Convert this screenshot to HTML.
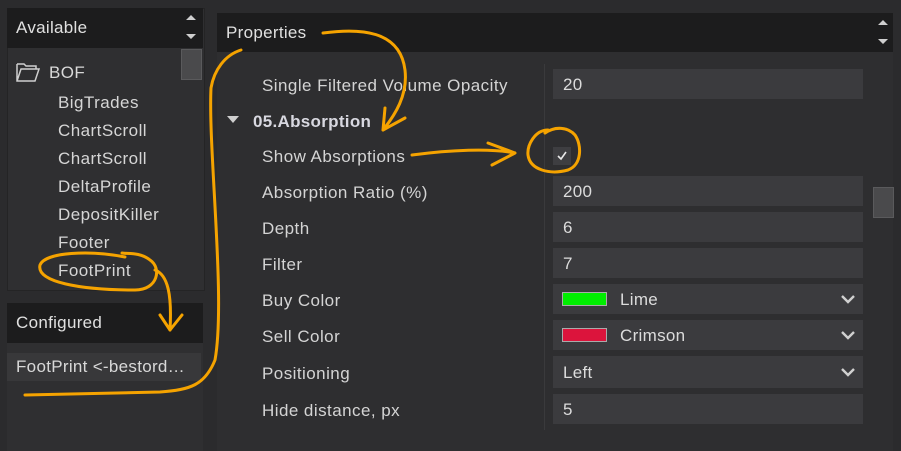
<!DOCTYPE html>
<html><head><style>
body{margin:0;width:901px;height:451px;background:#2b2b2d;font-family:"Liberation Sans",sans-serif;color:#d8d8d8;position:relative;overflow:hidden}
.a{position:absolute}
.hdr{background:#1c1c1d;font-size:17px;color:#e0e0e0;letter-spacing:.3px}
.lbl{position:absolute;left:262px;font-size:17px;letter-spacing:.45px;color:#d4d4d4}
.li{position:absolute;left:58px;font-size:17px;letter-spacing:.45px;color:#d6d6d6}
.val{position:absolute;left:553px;width:310px;height:30px;background:#3b3b3e;font-size:17px;letter-spacing:.3px;line-height:31px;text-indent:10px;color:#dcdcdc}
.chev{position:absolute;right:8px;top:8px}
.sw{position:absolute;left:9px;top:8px;width:43px;height:12px;border:1px solid #aaa}
.swt{position:absolute;left:67px;top:0;text-indent:0}
</style></head><body>
<div class="a" style="left:7px;top:8px;width:196px;height:281px;background:#2f2f31;border:1px solid #242425"></div>
<div class="a hdr" style="left:7px;top:8px;width:174px;height:40px;line-height:40px;text-indent:9px">Available</div>
<div class="a" style="left:181px;top:8px;width:22px;height:40px;background:#1c1c1d"></div>
<svg class="a" style="left:185px;top:13px" width="12" height="30"><path d="M1 7 L6 2 L11 7Z M1 21 L11 21 L6 26Z" fill="#cfcfcf"/></svg>
<div class="a" style="left:181px;top:49px;width:19px;height:29px;background:#4a4a4c;border:1px solid #5a5a5c"></div>
<svg class="a" style="left:15px;top:61px" width="26" height="22"><path d="M2 3 H9 L11 5 H21 V8 M2 3 V20 H20 L24 8 H6 L2 20" fill="none" stroke="#cfcfcf" stroke-width="1.5"/></svg>
<div class="a" style="left:49px;top:63px;font-size:17px;letter-spacing:.4px">BOF</div>
<div class="li" style="top:93px">BigTrades</div>
<div class="li" style="top:121px">ChartScroll</div>
<div class="li" style="top:149px">ChartScroll</div>
<div class="li" style="top:177px">DeltaProfile</div>
<div class="li" style="top:205px">DepositKiller</div>
<div class="li" style="top:233px;height:17px;overflow:hidden">Footer</div>
<div class="li" style="top:261px">FootPrint</div>
<div class="a hdr" style="left:7px;top:303px;width:196px;height:40px;line-height:40px;text-indent:9px">Configured</div>
<div class="a" style="left:7px;top:343px;width:196px;height:108px;background:#2f2f31"></div>
<div class="a" style="left:7px;top:353px;width:194px;height:28px;background:#38383a;font-size:17px;letter-spacing:.3px;line-height:28px;text-indent:9px;white-space:nowrap;overflow:hidden">FootPrint &lt;-bestord…</div>
<div class="a" style="left:217px;top:13px;width:676px;height:438px;background:#2e2e30"></div>
<div class="a hdr" style="left:217px;top:13px;width:656px;height:39px;line-height:39px;text-indent:9px">Properties</div>
<div class="a" style="left:873px;top:13px;width:20px;height:39px;background:#1c1c1d"></div>
<svg class="a" style="left:877px;top:18px" width="12" height="30"><path d="M1 7 L6 2 L11 7Z M1 21 L11 21 L6 26Z" fill="#cfcfcf"/></svg>
<div class="a" style="left:873px;top:187px;width:19px;height:29px;background:#4a4a4c;border:1px solid #5a5a5c"></div>
<div class="a" style="left:544px;top:64px;width:1px;height:366px;background:#3a3a3c"></div>
<div class="lbl" style="top:76px">Single Filtered Volume Opacity</div>
<div class="val" style="top:69px">20</div>
<svg class="a" style="left:226px;top:115px" width="14" height="10"><path d="M1 1 H13 L7 8Z" fill="#cfcfcf"/></svg>
<div class="a" style="left:253px;top:112px;font-size:17px;letter-spacing:.3px;font-weight:bold;color:#d8d8e0">05.Absorption</div>
<div class="lbl" style="top:147px">Show Absorptions</div>
<div class="a" style="left:553px;top:147px;width:18px;height:18px;background:#3e3e41"></div>
<svg class="a" style="left:556px;top:150px" width="12" height="12"><path d="M2 6 L5 9 L10 2" fill="none" stroke="#e8e8e8" stroke-width="1.6"/></svg>
<div class="lbl" style="top:183px">Absorption Ratio (%)</div><div class="val" style="top:176px">200</div>
<div class="lbl" style="top:219px">Depth</div><div class="val" style="top:212px">6</div>
<div class="lbl" style="top:255px">Filter</div><div class="val" style="top:248px">7</div>
<div class="lbl" style="top:291px">Buy Color</div>
<div class="val" style="top:284px"><span class="sw" style="background:#00ee00"></span><span class="swt">Lime</span><svg class="chev" width="14" height="14"><path d="M1 4 L7 10 L13 4" fill="none" stroke="#d0d0d0" stroke-width="2.4"/></svg></div>
<div class="lbl" style="top:327px">Sell Color</div>
<div class="val" style="top:320px"><span class="sw" style="background:#dc143c"></span><span class="swt">Crimson</span><svg class="chev" width="14" height="14"><path d="M1 4 L7 10 L13 4" fill="none" stroke="#d0d0d0" stroke-width="2.4"/></svg></div>
<div class="lbl" style="top:364px">Positioning</div>
<div class="val" style="top:356px;height:32px;line-height:33px">Left<svg class="chev" style="top:9px" width="14" height="14"><path d="M1 4 L7 10 L13 4" fill="none" stroke="#d0d0d0" stroke-width="2.4"/></svg></div>
<div class="lbl" style="top:401px">Hide distance, px</div><div class="val" style="top:394px">5</div>
<svg class="a" style="left:0;top:0" width="901" height="451"><g fill="none" stroke="#f5a300" stroke-width="3" stroke-linecap="round" stroke-linejoin="round">
<path d="M241 50 C225 55 214 70 211 88 C208 150 226 300 215 360 C205 385 190 390 160 392 L25 395"/>
<path d="M323 33 C360 28 400 30 405 70 C408 95 395 115 383 130 M383 130 L405 118 M383 130 L385 108"/>
<path d="M412 155 C450 150 490 148 515 153 M515 153 L488 143 M515 153 L492 165"/>
<path d="M548 130 C535 130 527 145 528 155 C530 170 550 175 568 170 C582 165 582 145 575 135 C568 127 555 126 545 133"/>
<path d="M125 257 C90 250 45 252 40 265 C36 282 80 290 135 290 C158 290 162 268 150 260 C140 252 128 254 122 253 M155 270 C168 275 172 295 170 330 M170 330 L160 315 M170 330 L182 315"/>
</g></svg>
</body></html>
